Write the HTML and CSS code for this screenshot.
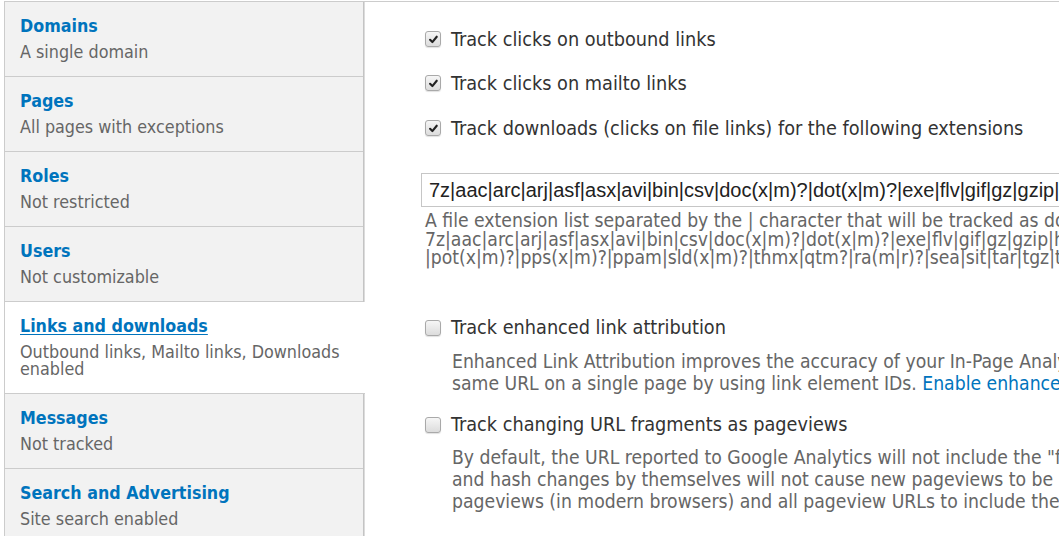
FILE: index.html
```html
<!DOCTYPE html>
<html lang="en">
<head>
<meta charset="utf-8">
<title>Tracking scope</title>
<link rel="stylesheet" href="styles.css">
</head>
<body>
<div class="vtabs">
  <ul class="tabs">
    <li class="tab"><a class="tab-title" href="#">Domains</a><span class="summary">A single domain</span></li>
    <li class="tab"><a class="tab-title" href="#">Pages</a><span class="summary">All pages with exceptions</span></li>
    <li class="tab"><a class="tab-title" href="#">Roles</a><span class="summary">Not restricted</span></li>
    <li class="tab"><a class="tab-title" href="#">Users</a><span class="summary">Not customizable</span></li>
    <li class="tab active"><a class="tab-title" href="#">Links and downloads</a><span class="summary">Outbound links, Mailto links, Downloads enabled</span></li>
    <li class="tab"><a class="tab-title" href="#">Messages</a><span class="summary">Not tracked</span></li>
    <li class="tab"><a class="tab-title" href="#">Search and Advertising</a><span class="summary">Site search enabled</span></li>
  </ul>
  <div class="pane">
    <label class="check-row r1"><span class="box checked"><svg viewBox="0 0 16 16" width="16" height="16"><path d="M3.8 8.4 L6.6 11.2 L12 4.6" fill="none" stroke="#222" stroke-width="2.6" stroke-linecap="round" stroke-linejoin="round"/></svg></span><span class="label">Track clicks on outbound links</span></label>
    <label class="check-row r2"><span class="box checked"><svg viewBox="0 0 16 16" width="16" height="16"><path d="M3.8 8.4 L6.6 11.2 L12 4.6" fill="none" stroke="#222" stroke-width="2.6" stroke-linecap="round" stroke-linejoin="round"/></svg></span><span class="label">Track clicks on mailto links</span></label>
    <label class="check-row r3"><span class="box checked"><svg viewBox="0 0 16 16" width="16" height="16"><path d="M3.8 8.4 L6.6 11.2 L12 4.6" fill="none" stroke="#222" stroke-width="2.6" stroke-linecap="round" stroke-linejoin="round"/></svg></span><span class="label">Track downloads (clicks on file links) for the following extensions</span></label>
    <input class="ext-input" type="text" value="7z|aac|arc|arj|asf|asx|avi|bin|csv|doc(x|m)?|dot(x|m)?|exe|flv|gif|gz|gzip|hqx|jar|jpe?g|js|mp(2|3|4|e?g)|mov(ie)?|msi|msp|pdf|phps|png|ppt(x|m)?">
    <div class="desc desc-ext">
      <div class="line">A file extension list separated by the | character that will be tracked as download when clicked. Regular expressions are supported. For example:</div>
      <div class="line">7z|aac|arc|arj|asf|asx|avi|bin|csv|doc(x|m)?|dot(x|m)?|exe|flv|gif|gz|gzip|hqx|jar|jpe?g|js|mp(2|3|4|e?g)|mov(ie)?|msi|msp|pdf|phps|png|ppt(x|m)?</div>
      <div class="line">|pot(x|m)?|pps(x|m)?|ppam|sld(x|m)?|thmx|qtm?|ra(m|r)?|sea|sit|tar|tgz|torrent|txt|wav|wma|wmv|wpd|xls(x|m|b)?|xlt(x|m)|xlam|xml|z|zip</div>
    </div>
    <label class="check-row r4"><span class="box"></span><span class="label">Track enhanced link attribution</span></label>
    <div class="desc desc-sub d1">
      <div class="line">Enhanced Link Attribution improves the accuracy of your In-Page Analytics report by automatically differentiating between multiple links to the</div>
      <div class="line">same URL on a single page by using link element IDs. <a href="#" class="inline-link">Enable enhanced link attribution</a> in the Admin UI of your Google Analytics account.</div>
    </div>
    <label class="check-row r5"><span class="box"></span><span class="label">Track changing URL fragments as pageviews</span></label>
    <div class="desc desc-sub d2">
      <div class="line">By default, the URL reported to Google Analytics will not include the "fragment identifier" (i.e. the portion of the URL beginning with a hash sign),</div>
      <div class="line">and hash changes by themselves will not cause new pageviews to be reported. Checking this box will cause hash changes to be reported as</div>
      <div class="line">pageviews (in modern browsers) and all pageview URLs to include the fragment where applicable.</div>
    </div>
  </div>
</div>
</body>
</html>
```
FILE: styles.css
```css
html, body {
  margin: 0;
  padding: 0;
  overflow: hidden;
  background: #fff;
}
body {
  font-family: "DejaVu Sans Condensed", "DejaVu Sans", sans-serif;
  color: #333;
  height: 536px;
}
.vtabs {
  display: flex;
  margin: 1px 0 0 4px;
  border-top: 1px solid #cccccc;
  border-left: 1px solid #cccccc;
  height: 534px;
  overflow: hidden;
}
.tabs {
  list-style: none;
  margin: 0;
  padding: 0;
  width: 358px;
  flex: none;
  background: #f2f2f2;
  border-right: 1px solid #c4c4c4;
  box-shadow: 1px 0 0 #dcdcdc;
}
.tab {
  display: flex;
  flex-direction: column;
  padding: 12px 10px 16px 15px;
  border-bottom: 1px solid #cccccc;
  background: #f2f2f2;
}
.tab.active {
  background: #fff;
  margin-right: -2px;
  position: relative;
}
.tab-title {
  font-weight: bold;
  font-size: 17.7px;
  line-height: 24px;
  color: #0074bd;
  text-decoration: none;
}
.tab.active .tab-title {
  text-decoration: underline;
  text-underline-offset: 2px;
}
.summary {
  margin-top: 5px;
  font-size: 17.8px;
  line-height: 17px;
  color: #666;
}
.pane {
  flex: 1;
  min-width: 0;
  overflow: hidden;
  padding-left: 61px;
}
.check-row {
  display: flex;
  align-items: center;
  height: 20px;
  white-space: nowrap;
}
.r1 { margin-top: 27px; }
.r2 { margin-top: 24px; }
.r3 { margin-top: 25px; }
.r4 { margin-top: 50px; }
.r5 { margin-top: 20px; }
.box {
  width: 14px;
  height: 14px;
  flex: none;
  border: 1px solid #a9a9a9;
  border-radius: 3px;
  background: linear-gradient(#f6f6f6, #dcdcdc);
  box-shadow: 0 1px 1px rgba(0,0,0,0.12);
  display: flex;
  align-items: center;
  justify-content: center;
  margin-right: 10px;
}
.box svg {
  width: 13px;
  height: 13px;
}
.label {
  font-size: 19.7px;
  color: #333;
}
.ext-input {
  display: block;
  margin: 35px 0 0 -4px;
  width: 1000px;
  height: 34px;
  box-sizing: border-box;
  border: 1px solid #c6c6c6;
  padding: 0 7px;
  font-family: "Liberation Sans", Arial, sans-serif;
  font-size: 20px;
  color: #222;
  background: #fff;
  outline: none;
}
.desc {
  color: #666;
  font-size: 19.2px;
  white-space: nowrap;
}
.desc-ext {
  margin-top: 5px;
  line-height: 18.5px;
}
.desc-sub {
  padding-left: 27px;
  line-height: 22px;
}
.d1 { margin-top: 13px; }
.d2 { margin-top: 12px; }
.inline-link {
  color: #0074bd;
  text-decoration: none;
}
```
